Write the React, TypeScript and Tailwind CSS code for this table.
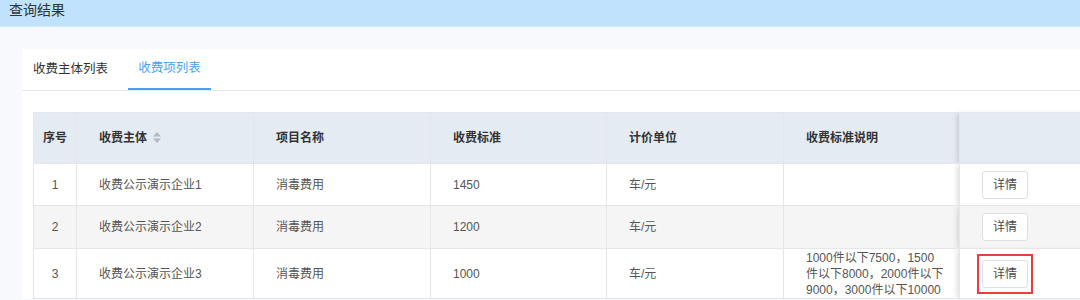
import React from "react";

type Row = {
  no: number;
  subject: string;
  item: string;
  price: string;
  unit: string;
  note: string[];
  height: string;
  striped?: boolean;
  marked?: boolean;
};

const rows: Row[] = [
  { no: 1, subject: "收费公示演示企业1", item: "消毒费用", price: "1450", unit: "车/元", note: [], height: "h-[42px]" },
  { no: 2, subject: "收费公示演示企业2", item: "消毒费用", price: "1200", unit: "车/元", note: [], height: "h-[43px]", striped: true },
  {
    no: 3,
    subject: "收费公示演示企业3",
    item: "消毒费用",
    price: "1000",
    unit: "车/元",
    note: ["1000件以下7500，1500", "件以下8000，2000件以下", "9000，3000件以下10000"],
    height: "h-[50px]",
    marked: true,
  },
];

function SortIcon() {
  return (
    <svg width="8" height="11" viewBox="0 0 8 11" className="ml-[6px] inline-block align-[-1px]">
      <path d="M4 0 L8 4.5 L0 4.5 Z" fill="#b4b8bf" />
      <path d="M4 11 L8 6.5 L0 6.5 Z" fill="#b4b8bf" />
    </svg>
  );
}

function DetailButton({ marked }: { marked?: boolean }) {
  return (
    <span className="relative inline-block">
      <button className="h-[28px] w-[46px] rounded-[3px] border border-[#dcdfe6] bg-white text-[12px] text-[#4a4a4a]">
        详情
      </button>
      {marked && (
        <span className="pointer-events-none absolute -left-[5px] -right-[5px] -top-[6px] -bottom-[6px] border-2 border-[#ee3b3b]" />
      )}
    </span>
  );
}

const cell = "border border-[#e4e6ea] pl-[22px] pr-2 text-left align-middle";
const fixedCell = "border border-[#e4e6ea] pl-[22px] text-left align-middle shadow-[-4px_0_5px_-1px_rgba(0,0,0,0.13)]";

export default function App() {
  return (
    <div className="h-[300px] w-[1080px] overflow-hidden bg-[#f8f9fc] font-['Liberation_Sans','Noto_Sans_CJK_SC',sans-serif]">
      <div className="h-[27px] border-b border-[#d9e7f5] bg-[#c1e2fd] pl-[9px] pt-[1px] text-[14px] leading-[18px] text-[#333]">
        查询结果
      </div>

      <div className="ml-[22px] mt-[22px] w-[1100px] bg-white">
        <div className="flex h-[42px] border-b border-[#e4e7ed] text-[12.5px]">
          <div className="flex w-[106px] items-center pl-[11px] text-[#333]">收费主体列表</div>
          <div className="flex w-[83px] items-center justify-center border-b-2 border-[#4a9ff0] text-[#4a9ff0]">
            收费项列表
          </div>
        </div>

        <div className="px-[11px] pt-[21px]">
          <table className="table-fixed border-collapse text-[12px]">
            <colgroup>
              <col className="w-[43px]" />
              <col className="w-[177px]" />
              <col className="w-[177px]" />
              <col className="w-[176px]" />
              <col className="w-[177px]" />
              <col className="w-[176px]" />
              <col className="w-[130px]" />
            </colgroup>
            <thead>
              <tr className="h-[51px] bg-[#e5ebf3] font-bold text-[#333]">
                <th className="border border-[#e4e6ea] text-center">序号</th>
                <th className={cell}>
                  收费主体
                  <SortIcon />
                </th>
                <th className={cell}>项目名称</th>
                <th className={cell}>收费标准</th>
                <th className={cell}>计价单位</th>
                <th className={cell}>收费标准说明</th>
                <th className={`${fixedCell} bg-[#e5ebf3]`}></th>
              </tr>
            </thead>
            <tbody className="text-[#555]">
              {rows.map((r) => (
                <tr key={r.no} className={`${r.height} ${r.striped ? "bg-[#f5f5f5]" : "bg-white"}`}>
                  <td className="border border-[#e4e6ea] text-center">{r.no}</td>
                  <td className={cell}>{r.subject}</td>
                  <td className={cell}>{r.item}</td>
                  <td className={cell}>{r.price}</td>
                  <td className={cell}>{r.unit}</td>
                  <td className={`${cell} leading-[16px]`}>
                    {r.note.map((line) => (
                      <div key={line} className="whitespace-nowrap">
                        {line}
                      </div>
                    ))}
                  </td>
                  <td className={`${fixedCell} ${r.striped ? "bg-[#f5f5f5]" : "bg-white"}`}>
                    <DetailButton marked={r.marked} />
                  </td>
                </tr>
              ))}
            </tbody>
          </table>
        </div>
      </div>
    </div>
  );
}
